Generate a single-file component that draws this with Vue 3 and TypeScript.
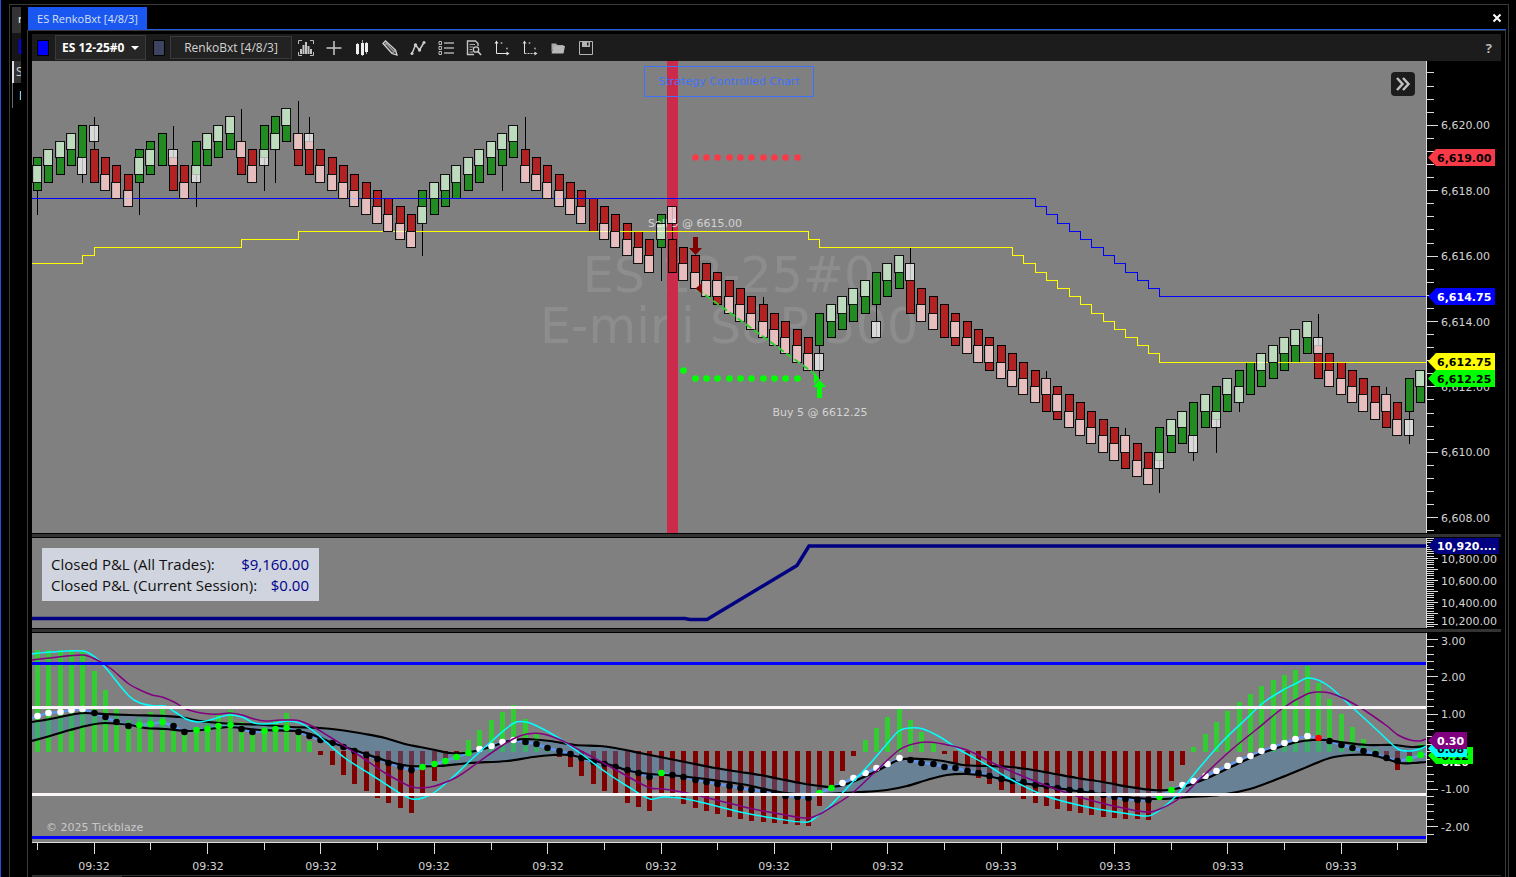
<script setup lang="ts">
import { ref } from 'vue'

type Side = 'g' | 'r'
/** side, body top, smoothed box top, wick high, wick low - all in ticks below 6,620.00 */
type Bar = [Side, number, number | null, (number | null)?, (number | null)?]
type Point = [number, number]

const bars: Bar[] = [
  ['g', 4, 5, null, 11], ['g', 3, 3], ['g', 2, 2], ['g', 1, 1], ['g', 0, 4, null, 7],
  ['r', 3, 0, -1], ['r', 4, 6], ['r', 5, 7], ['r', 6, 8], ['g', 3, 4, null, 11],
  ['g', 2, 3], ['g', 1, null], ['r', 4, 3, 0], ['r', 5, 7], ['g', 2, 5, null, 10],
  ['g', 1, 1], ['g', 0, 0], ['g', -1, -1], ['r', 2, 2, -2], ['r', 3, 5],
  ['g', 0, 3, null, 8], ['g', -1, 1, null, 7], ['g', -2, -2], ['r', 1, 1, -3], ['r', 2, 1, -1],
  ['r', 3, 5], ['r', 4, 6], ['r', 5, 7], ['r', 6, 8], ['r', 7, 9],
  ['r', 8, 10], ['r', 9, 11], ['r', 10, 12], ['r', 11, 13], ['g', 8, 10, null, 16],
  ['g', 7, 7], ['g', 6, 6], ['g', 5, 5], ['g', 4, 4], ['g', 3, 3],
  ['g', 2, 2], ['g', 1, 1, null, 8], ['g', 0, 0], ['r', 3, 5, -1], ['r', 4, 6],
  ['r', 5, 7], ['r', 6, 8], ['r', 7, 9], ['r', 8, 10], ['r', 9, null],
  ['r', 10, 12], ['r', 11, 13], ['r', 12, 14], ['r', 13, 15], ['r', 14, 16],
  ['g', 11, 12, null, 19], ['r', 14, 10, 10], ['r', 15, 17], ['r', 16, 18], ['r', 17, 19],
  ['r', 18, 19], ['r', 19, 21], ['r', 20, 22], ['r', 21, 23], ['r', 22, 24, 21],
  ['r', 23, 25], ['r', 24, 26], ['r', 25, 27], ['r', 26, 28], ['g', 23, 28, null, 31],
  ['g', 22, 22], ['g', 21, 21], ['g', 20, 20], ['g', 19, 19], ['g', 18, 24, null, 26],
  ['g', 17, 17], ['g', 16, 16], ['r', 19, 17, 15], ['r', 20, 22], ['r', 21, 23],
  ['r', 22, null], ['r', 23, 24], ['r', 24, 26], ['r', 25, 27], ['r', 26, 27],
  ['r', 27, 29], ['r', 28, 30], ['r', 29, 31], ['r', 30, 32], ['r', 31, 31, 30],
  ['r', 32, 33], ['r', 33, 35], ['r', 34, 36], ['r', 35, 37], ['r', 36, 38],
  ['r', 37, 39], ['r', 38, 38, 37], ['r', 39, 41], ['r', 40, 42], ['g', 37, 40, null, 45],
  ['g', 36, 36], ['g', 35, 35], ['g', 34, 38, null, 41], ['g', 33, 33], ['g', 32, 35, null, 40],
  ['g', 31, 31], ['g', 30, 32, null, 35], ['g', 29, null], ['g', 28, 28], ['g', 27, 27],
  ['g', 26, 26], ['g', 25, 25], ['g', 24, 24], ['r', 27, 26, 23], ['r', 28, 30],
  ['r', 29, 31], ['r', 30, 32], ['r', 31, 33], ['r', 32, 34], ['r', 33, 33, 32],
  ['r', 34, 36], ['g', 31, 36, null, 39], ['g', 30, 30],
]

const barX = (i: number) => Math.floor(37.6 + 11.335 * i) + 0.5
const tickY = (k: number) => Math.floor(125 + 8.175 * k) + 0.5

const candles = bars.map(([side, body, box, high, low], i) => ({
  x: barX(i),
  side,
  top: tickY(body),
  height: tickY(body + 4) - tickY(body),
  boxTop: box === null ? null : tickY(box),
  boxHeight: box === null ? 0 : tickY(box + 2) - tickY(box),
  wickTop: tickY(high ?? body),
  wickBottom: tickY(low ?? body + 4),
}))

/** Staircase line: first level, then [bar index, level] changes */
function stairs(first: number, steps: Point[]): string {
  let d = `M32 ${tickY(first)}`
  for (const [i, k] of steps) d += `H${barX(i)}V${tickY(k)}`
  return d + 'H1426'
}
const run = (from: number, level: number, count: number): Point[] =>
  Array.from({ length: count }, (_, n) => [from + n, level + n] as Point)

const yellowLine = stairs(17, [[4, 16], [5, 15], [18, 14], [23, 13], [68, 14], [69, 15], ...run(86, 16, 14)])
const blueLine = stairs(9, run(88, 10, 12))

const stopDots = Array.from({ length: 10 }, (_, n) => barX(58 + n))

const priceTicks = Array.from({ length: 36 }, (_, n) => {
  const index = n - 4
  return { y: Math.floor(125.3 + index * 13.08) + 0.5, major: index % 5 === 0 }
}).filter((t) => t.y < 532)
const priceLabels = [6620, 6618, 6616, 6614, 6612, 6610, 6608].map((p, n) => ({
  text: p.toLocaleString('en-US', { minimumFractionDigits: 2 }),
  y: Math.round(129.4 + n * 65.4),
}))

const pnlTicks = Array.from({ length: 41 }, (_, n) => ({
  y: Math.floor(538.5 + n * 2.2) + 0.5,
  major: n % 5 === 4 && n > 4,
}))
const pnlLabels = [
  { text: '10,800.00', y: 563 },
  { text: '10,600.00', y: 585 },
  { text: '10,400.00', y: 607 },
  { text: '10,200.00', y: 625 },
]

const oscTicks = Array.from({ length: 27 }, (_, n) => ({
  y: Math.floor(639.3 + n * 7.49) + 0.5,
  major: n % 5 === 0,
}))
const oscLabels = [
  { text: '3.00', y: 645 },
  { text: '2.00', y: 681 },
  { text: '1.00', y: 718 },
  { text: '-1.00', y: 793 },
  { text: '-2.00', y: 831 },
]

const histTips = [
  650, 650, 650, 650, 652, 671, 690, 709, 720, 718, 712, 706, 723, 730, 727, 722, 715, 710, 722, 730,
  727, 720, 713, 727, 741, 754, 764, 774, 783, 790, 797, 802, 807, 812, 794, 780, 759, 753, 740, 730,
  720, 712, 705, 719, 733, 746, 756, 766, 775, 783, 790, 794, 802, 806, 810, 795, 796, 803, 807, 810,
  813, 816, 818, 820, 821, 822, 823, 824, 825, 805, 789, 770, 755, 740, 728, 717, 709, 720, 732, 743,
  753, 762, 771, 777, 783, 789, 793, 798, 802, 805, 808, 810, 812, 814, 816, 817, 818, 818, 819, 793,
  780, 764, 747, 734, 722, 711, 702, 694, 686, 680, 675, 670, 666, 683, 699, 714, 727, 739, 749, 757,
  769, 755, 744,
]
const histogram = histTips.map((tip, i) => ({
  x: barX(i) - 2.5,
  y: Math.min(tip, 751),
  height: Math.abs(751 - tip) + 1,
  up: tip < 751,
}))

const dotYs = [
  716, 713, 712, 710, 709, 713, 717, 722, 726, 725, 724, 722, 726, 732, 730, 729, 726, 725, 729, 732,
  731, 729, 728, 732, 736, 740, 743, 747, 751, 755, 759, 763, 767, 770, 767, 764, 761, 757, 753, 749,
  746, 742, 740, 742, 744, 748, 751, 754, 758, 762, 764, 767, 770, 773, 777, 773, 775, 777, 780, 782,
  784, 786, 788, 790, 791, 793, 796, 797, 798, 793, 788, 783, 778, 773, 768, 764, 758, 760, 763, 764,
  767, 768, 771, 773, 776, 779, 781, 782, 785, 786, 788, 790, 791, 793, 795, 797, 799, 800, 800, 797,
  790, 785, 781, 776, 771, 766, 760, 756, 751, 747, 743, 739, 736, 738, 741, 745, 748, 751, 754, 758,
  761, 759, 755,
]
const dotKinds =
  'wwwwwbbbbgggbbggggbbgggbbbbbbbbbbbgggggwwwwbbbbbbbbbbbbgbbbbbbbbbbbbbggwwwwww' +
  'bbbbbbbbbbbbbbbbbbbbbbggwwwwwwwwwwwwrbbbbbbbgg'
const dots = dotYs.map((y, i) => ({ x: barX(i), y, kind: dotKinds[i] }))
const momentumLine = 'M32 718L' + dots.map((d) => `${d.x} ${d.y}`).join('L') + 'L1426 754'

const upperBand: Point[] = [
  [32, 722], [50, 719], [75, 714], [85, 713], [105, 714], [130, 715], [165, 716], [180, 717], [200, 721],
  [220, 723], [240, 724], [265, 725], [290, 727], [320, 728], [340, 730], [365, 734], [385, 738], [405, 744],
  [420, 747], [435, 750], [450, 753], [465, 753], [475, 751], [490, 747], [505, 742], [515, 740], [525, 739],
  [550, 741], [575, 745], [600, 746], [615, 748], [640, 753], [665, 758], [690, 763], [715, 768], [740, 772],
  [760, 775], [780, 779], [800, 783], [820, 786], [832, 787], [847, 784], [877, 771], [899, 760], [923, 759],
  [943, 761], [963, 765], [987, 766], [1010, 767], [1027, 769], [1050, 773], [1077, 778], [1103, 782],
  [1130, 787], [1153, 790], [1168, 790], [1183, 787], [1197, 782], [1210, 777], [1233, 766], [1257, 755],
  [1280, 747], [1297, 742], [1313, 740], [1327, 740], [1340, 742], [1367, 745], [1393, 745], [1413, 747],
  [1426, 746],
]
const lowerBand: Point[] = [
  [32, 741], [50, 736], [70, 730], [90, 725], [105, 723], [130, 725], [145, 728], [165, 729], [190, 731],
  [217, 728], [230, 727], [260, 730], [297, 731], [313, 735], [330, 742], [363, 753], [390, 762], [410, 766],
  [440, 766], [470, 763], [507, 761], [533, 757], [553, 755], [570, 755], [587, 759], [607, 764], [630, 771],
  [650, 774], [680, 776], [720, 781], [747, 785], [773, 791], [797, 794], [820, 794], [860, 792], [887, 790],
  [907, 786], [927, 780], [947, 775], [967, 774], [987, 776], [1010, 781], [1043, 786], [1077, 791],
  [1110, 795], [1137, 798], [1160, 799], [1190, 797], [1220, 795], [1250, 789], [1280, 778], [1307, 767],
  [1330, 758], [1350, 755], [1370, 755], [1387, 759], [1400, 763], [1413, 763], [1426, 762],
]
const cyanPoints: Point[] = [
  [32, 654], [50, 652], [83, 651], [95, 657], [105, 667], [129, 696], [140, 703], [155, 706], [165, 706],
  [175, 712], [186, 719], [198, 722], [210, 720], [220, 717], [230, 715], [242, 717], [254, 723], [264, 724],
  [276, 723], [288, 721], [300, 723], [312, 730], [325, 741], [345, 758], [370, 774], [390, 787], [405, 796],
  [412, 799], [423, 798], [435, 792], [453, 777], [473, 758], [493, 740], [514, 723], [526, 722], [537, 726],
  [557, 737], [580, 753], [607, 773], [627, 786], [650, 799], [663, 797], [680, 798], [700, 802], [740, 812],
  [773, 818], [808, 822], [820, 814], [830, 806], [847, 788], [867, 767], [887, 744], [899, 731], [910, 728],
  [923, 729], [940, 737], [960, 750], [987, 765], [1010, 779], [1043, 795], [1070, 803], [1097, 809],
  [1123, 813], [1148, 816], [1160, 810], [1177, 795], [1200, 767], [1223, 741], [1247, 718], [1263, 703],
  [1283, 690], [1297, 683], [1307, 678], [1318, 680], [1330, 687], [1353, 708], [1377, 730], [1398, 749],
  [1410, 751], [1420, 749], [1426, 746],
]
const purplePoints: Point[] = [
  [32, 660], [50, 658], [83, 655], [95, 659], [110, 668], [129, 684], [140, 690], [152, 695], [162, 697],
  [174, 702], [186, 709], [196, 712], [210, 714], [220, 714], [230, 713], [242, 715], [254, 719], [265, 721],
  [280, 720], [290, 720], [300, 721], [312, 726], [330, 737], [360, 756], [385, 773], [405, 784], [412, 787],
  [422, 788], [435, 786], [457, 777], [480, 761], [500, 747], [515, 738], [527, 734], [543, 734], [563, 741],
  [583, 752], [607, 765], [627, 776], [650, 788], [663, 789], [687, 793], [720, 801], [753, 809], [780, 814],
  [808, 818], [820, 814], [830, 808], [850, 795], [873, 774], [899, 750], [913, 744], [927, 742], [943, 744],
  [967, 750], [997, 765], [1037, 782], [1070, 794], [1097, 802], [1123, 808], [1148, 812], [1160, 809],
  [1180, 798], [1200, 779], [1230, 751], [1257, 729], [1283, 708], [1307, 694], [1318, 692], [1330, 693],
  [1347, 700], [1367, 712], [1387, 726], [1398, 735], [1410, 740], [1420, 741], [1426, 739],
]

/** Smooth path through a list of points */
function smooth(points: Point[]): string {
  let d = `M${points[0][0]} ${points[0][1]}`
  for (let i = 0; i < points.length - 1; i++) {
    const a = points[Math.max(0, i - 1)]
    const b = points[i]
    const c = points[i + 1]
    const e = points[Math.min(points.length - 1, i + 2)]
    const w = (c[0] - b[0]) / 3
    const s1 = (c[1] - a[1]) / (c[0] - a[0])
    const s2 = (e[1] - b[1]) / (e[0] - b[0])
    d += `C${(b[0] + w).toFixed(1)} ${(b[1] + s1 * w).toFixed(1)} ${(c[0] - w).toFixed(1)} ${(c[1] - s2 * w).toFixed(1)} ${c[0]} ${c[1]}`
  }
  return d
}
const upperPath = smooth(upperBand)
const lowerPath = smooth(lowerBand)
const bandArea =
  upperPath + 'L' + [...lowerBand].reverse().map(([x, y]) => `${x} ${y}`).join('L') + 'Z'
const cyanPath = smooth(cyanPoints)
const purplePath = smooth(purplePoints)

const timeTicks = Array.from({ length: 25 }, (_, n) => ({ x: barX(n * 5), major: n % 2 === 1 })).filter(
  (t) => t.x < 1420,
)
const timeLabels = Array.from({ length: 12 }, (_, n) => ({
  x: Math.round(94.4 + n * 113.35),
  text: n < 8 ? '09:32' : '09:33',
}))

interface Tag { y: number; right: number; text: string; fill: string; ink: string }
const tagPath = (t: Tag) => `M1428 ${t.y}L1436 ${t.y - 8.5}H${t.right}V${t.y + 8.5}H1436Z`
const priceTags: Tag[] = [
  { y: 157.5, right: 1495, text: '6,619.00', fill: '#f83a48', ink: '#000' },
  { y: 296.5, right: 1495, text: '6,614.75', fill: '#0000ff', ink: '#fff' },
  { y: 361.5, right: 1495, text: '6,612.75', fill: '#ffff00', ink: '#000' },
  { y: 378.5, right: 1495, text: '6,612.25', fill: '#00ff00', ink: '#000' },
]
const oscTags: Tag[] = [
  { y: 761.5, right: 1473, text: '-0.26', fill: '#000', ink: '#fff' },
  { y: 755.5, right: 1473, text: '-0.12', fill: '#00ff00', ink: '#000' },
  { y: 748.5, right: 1467, text: '0.08', fill: '#00ffff', ink: '#000' },
  { y: 740.5, right: 1467, text: '0.30', fill: '#800080', ink: '#fff' },
]
const pnlTag: Tag = { y: 545.5, right: 1499, text: '10,920....', fill: '#000080', ink: '#fff' }

const instrument = ref('ES 12-25#0')

const closedPnl = [
  { label: 'Closed P&L (All Trades):', value: '$9,160.00' },
  { label: 'Closed P&L (Current Session):', value: '$0.00' },
]
</script>

<template>
  <div class="desk">
    <div class="outer">
      <aside class="behind" aria-hidden="true">
        <div class="behind-tab">r</div>
        <div class="behind-bar"><i></i></div>
        <div class="behind-search">S</div>
        <div class="behind-item">I</div>
      </aside>

      <main class="window">
        <header class="tabs">
          <button class="tab" type="button">ES RenkoBxt [4/8/3]</button>
          <button class="close" type="button" aria-label="Close">
            <svg width="10" height="10" viewBox="0 0 10 10"><path d="M1.500 1.500L8.500 8.500M8.500 1.500L1.500 8.500" stroke="#fff" stroke-width="2" /></svg>
          </button>
        </header>

        <div class="content">
          <div class="toolbar">
            <button class="swatch link" type="button" aria-label="Instrument link colour"></button>
            <div class="instrument">
              <select v-model="instrument" aria-label="Instrument">
                <option>ES 12-25#0</option>
              </select>
              <svg width="8" height="4" viewBox="0 0 8 4"><path d="M0 0H8L4 4Z" fill="#fff" /></svg>
            </div>
            <button class="swatch interval" type="button" aria-label="Interval link colour"></button>
            <button class="bar-type" type="button">RenkoBxt [4/8/3]</button>

            <div class="tools">
              <button type="button" aria-label="Chart style">
                <svg viewBox="0 0 16 16"><path d="M.5 4V.5H4M12 .5H15.500V4M.5 12V15.500H4M12 15.500H15.500V12" fill="none" stroke="#bbb" /><path d="M2 9H4V14H2ZM4.500 5H6.500V14H4.500ZM7 2H9V14H7ZM9.500 6H11.500V14H9.500ZM12 9H14V14H12Z" fill="#c4c4c4" /></svg>
              </button>
              <button type="button" aria-label="Crosshair">
                <svg viewBox="0 0 16 16"><path d="M8 1V15M.5 8H15.500" stroke="#c8c8c8" stroke-width="1.500" /></svg>
              </button>
              <button type="button" aria-label="Candles">
                <svg viewBox="0 0 16 16"><path d="M3.500 3V15M8.500 0V16M12.500 2V14" stroke="#aaa" /><path d="M2 4H5V14H2ZM7 3H10V15H7ZM11 3H14V12H11Z" fill="#eee" /></svg>
              </button>
              <button type="button" aria-label="Drawing tools">
                <svg viewBox="0 0 16 16"><path d="M1 3.500L3.500 1L13.500 10L15 15L10 13.500Z" fill="#444" stroke="#d0d0d0" stroke-width="1.300" /><path d="M2.500 5L5 2.500M4 3.500L12 11.500M10 13.500L13.500 10" stroke="#d0d0d0" fill="none" /></svg>
              </button>
              <button type="button" aria-label="Indicators">
                <svg viewBox="0 0 16 16"><path d="M2 13.500L5.500 5L9.500 10L14 2.500" fill="none" stroke="#ccc" stroke-width="1.500" /><circle cx="2" cy="13.500" r="1.500" fill="#ccc" /><circle cx="5.500" cy="5" r="1.700" fill="#ccc" /><circle cx="9.500" cy="10" r="1.700" fill="#ccc" /><circle cx="14" cy="2.500" r="1.500" fill="#ccc" /></svg>
              </button>
              <button type="button" aria-label="Properties">
                <svg viewBox="0 0 16 16"><path d="M6 3H16M6 8H16M6 13H16" stroke="#aaa" stroke-width="1.500" /><path d="M1 1.500H3.500V4.500H1ZM1 6.500H3.500V9.500H1ZM1 11.500H3.500V14.500H1Z" fill="none" stroke="#bbb" /></svg>
              </button>
              <button type="button" aria-label="Data box">
                <svg viewBox="0 0 16 16"><path d="M12 6V3.500L9.500 1H1.500V14.500H8" fill="none" stroke="#c4c4c4" stroke-width="1.400" /><path d="M3.500 4.500H9M3.500 7H7M3.500 9.500H6M3.500 12H7" stroke="#aaa" /><circle cx="10" cy="9.500" r="2.700" fill="none" stroke="#ccc" stroke-width="1.300" /><path d="M12 11.500L15 15" stroke="#ccc" stroke-width="1.600" /></svg>
              </button>
              <button type="button" aria-label="Fit horizontal axis">
                <svg viewBox="0 0 16 16"><path d="M2.500 2V13.500H14" fill="none" stroke="#e4e4e4" /><path d="M.5 3.500L2.500 .5L4.500 3.500ZM12.500 11.500L15.500 13.500L12.500 15.500Z" fill="#e4e4e4" /><circle cx="7.500" cy="3" r="1" fill="#999" /><circle cx="13" cy="8.500" r="1" fill="#999" /></svg>
              </button>
              <button type="button" aria-label="Fit vertical axis">
                <svg viewBox="0 0 16 16"><path d="M2.500 2V13.500" stroke="#e4e4e4" /><path d="M2.500 13.500H13" stroke="#ccc" stroke-dasharray="2 1" /><path d="M.5 3.500L2.500 .5L4.500 3.500ZM12.500 11.500L15.500 13.500L12.500 15.500Z" fill="#d4d4d4" /><circle cx="7.500" cy="3" r="1" fill="#999" /><circle cx="13" cy="8.500" r="1" fill="#999" /></svg>
              </button>
              <button type="button" aria-label="Open template">
                <svg viewBox="0 0 16 16"><path d="M1.500 12V3.500H6L7.500 5H13.500V6H4Z" fill="#a8a8a8" /><path d="M3.500 6H15L13.500 13.500H1.500Z" fill="#b8b8b8" /></svg>
              </button>
              <button type="button" aria-label="Save">
                <svg viewBox="0 0 16 16"><path d="M1.500 1.500H14.500V14.500H1.500Z" fill="none" stroke="#b4b4b4" /><path d="M4 1.500H12V7H4Z" fill="#b4b4b4" /><path d="M9 2.500H10.500V5.500H9Z" fill="#1c1c1c" /></svg>
              </button>
            </div>
            <button class="help" type="button" aria-label="Help">?</button>
          </div>

          <section class="pane">
            <svg class="plot" viewBox="32 61 1469 472" role="img" aria-label="ES 12-25 price chart">
              <rect x="32" y="61" width="1394" height="472" fill="#808080" />
              <g class="watermark">
                <text x="729" y="292">ES 12-25#0</text>
                <text x="729" y="343">E-mini S&amp;P 500</text>
              </g>
              <rect x="667" y="61" width="11" height="472" fill="#cc2a4a" />
              <g class="crisp">
                <template v-for="c in candles" :key="c.x">
                  <line :x1="c.x" :x2="c.x" :y1="c.wickTop" :y2="c.wickBottom" stroke="#000" />
                  <rect class="body" :class="c.side" :x="c.x - 4" :y="c.top" width="8" :height="c.height" />
                </template>
                <path :d="blueLine" fill="none" stroke="#0000ff" />
                <path :d="yellowLine" fill="none" stroke="#ffff00" />
              </g>
              <g class="trade">
                <text x="695" y="227">Sell 5 @ 6615.00</text>
                <text x="820" y="416">Buy 5 @ 6612.25</text>
              </g>
              <g class="crisp">
                <template v-for="c in candles" :key="c.x">
                  <rect v-if="c.boxTop !== null" class="box" :x="c.x - 5" :y="c.boxTop" width="9" :height="c.boxHeight" />
                </template>
              </g>
              <path d="M697 289L819 377" stroke="#32cd32" stroke-width="2" stroke-dasharray="7 3" />
              <path d="M693 237H698V248H702L695.500 255L689 248H693Z" fill="#800000" />
              <path d="M695.500 288.500L702 283V294Z" fill="#800000" />
              <path d="M819.500 378.500L814 373V384Z" fill="#00ff00" />
              <path d="M817 398V387H813L819.500 380L826 387H822V398Z" fill="#00ff00" />
              <circle v-for="x in stopDots" :key="'s' + x" :cx="x" cy="157.500" r="3.300" fill="#f83a48" />
              <circle v-for="x in stopDots" :key="'t' + x" :cx="x" cy="378.500" r="3.300" fill="#00ff00" />
              <circle cx="683.500" cy="370.500" r="3.300" fill="#00ff00" />

              <g class="crisp axis">
                <path d="M1426.500 61V533" />
                <path v-for="t in priceTicks" :key="t.y" :d="`M1427 ${t.y}h${t.major ? 11 : 7}`" />
              </g>
              <text v-for="l in priceLabels" :key="l.y" class="label" x="1441" :y="l.y">{{ l.text }}</text>
              <template v-for="t in priceTags" :key="t.text">
                <path :d="tagPath(t)" :fill="t.fill" />
                <text class="tag" x="1437" :y="t.y + 4.500" :fill="t.ink">{{ t.text }}</text>
              </template>
            </svg>
            <div class="strategy">Strategy Controlled Chart</div>
            <button class="expand" type="button" aria-label="Expand trader panel">
              <svg width="16" height="16" viewBox="0 0 16 16"><path d="M2 2L7.500 8L2 14M8 2L13.500 8L8 14" fill="none" stroke="#c0c0c0" stroke-width="2.500" /></svg>
            </button>
          </section>

          <hr class="splitter" />

          <section class="pane">
            <svg class="plot" viewBox="32 538 1469 90" role="img" aria-label="Closed profit and loss">
              <rect x="32" y="538" width="1394" height="90" fill="#808080" />
              <path d="M32 618.500H685L690 619.500H707L797 565.500L809 546H1426" fill="none" stroke="#000080" stroke-width="3.500" />
              <g class="crisp axis">
                <path d="M1426.500 538V628" />
                <path v-for="t in pnlTicks" :key="t.y" :d="`M1427 ${t.y}h${t.major ? 11 : 7}`" />
              </g>
              <text v-for="l in pnlLabels" :key="l.y" class="label" x="1441" :y="l.y">{{ l.text }}</text>
              <path :d="tagPath(pnlTag)" :fill="pnlTag.fill" />
              <text class="tag" x="1437" :y="pnlTag.y + 4.500" :fill="pnlTag.ink">{{ pnlTag.text }}</text>
            </svg>
            <dl class="pnl">
              <div v-for="row in closedPnl" :key="row.label">
                <dt>{{ row.label }}</dt>
                <dd>{{ row.value }}</dd>
              </div>
            </dl>
          </section>

          <hr class="splitter" />

          <section class="pane">
            <svg class="plot" viewBox="32 633 1469 242" role="img" aria-label="Momentum oscillator">
              <rect x="32" y="633" width="1394" height="209" fill="#808080" />
              <g class="crisp">
                <rect v-for="h in histogram" :key="h.x" :x="h.x" :y="h.y" width="5" :height="h.height" :fill="h.up ? '#32cd32' : '#800000'" />
              </g>
              <path :d="bandArea" fill="#4682b4" fill-opacity="0.400" />
              <path :d="momentumLine" fill="none" stroke="#6495ed" stroke-width="2.500" />
              <path :d="upperPath" fill="none" stroke="#000" stroke-width="2.200" />
              <path :d="lowerPath" fill="none" stroke="#000" stroke-width="2.200" />
              <circle v-for="d in dots" :key="d.x" :class="['dot', d.kind]" :cx="d.x" :cy="d.y" r="3.300" />
              <path :d="cyanPath" fill="none" stroke="#00ffff" stroke-width="1.500" />
              <path :d="purplePath" fill="none" stroke="#800080" stroke-width="1.500" />
              <path d="M32 663.500H1426M32 837.500H1426" stroke="#0000ff" stroke-width="3" />
              <path d="M32 707.500H1426M32 794.500H1426" stroke="#f8f4f8" stroke-width="3" />
              <text class="copyright" x="46" y="831">© 2025 Tickblaze</text>

              <g class="crisp axis">
                <path d="M1426.500 633V842.500H32" />
                <path v-for="t in oscTicks" :key="t.y" :d="`M1427 ${t.y}h${t.major ? 11 : 7}`" />
                <path v-for="t in timeTicks" :key="t.x" :d="`M${t.x} 843v${t.major ? 11 : 7}`" />
              </g>
              <text v-for="l in oscLabels" :key="l.y" class="label" x="1441" :y="l.y">{{ l.text }}</text>
              <text v-for="l in timeLabels" :key="l.x" class="label time" :x="l.x" y="870">{{ l.text }}</text>
              <template v-for="t in oscTags" :key="t.text">
                <path :d="tagPath(t)" :fill="t.fill" />
                <text class="tag" x="1437" :y="t.y + 4.500" :fill="t.ink">{{ t.text }}</text>
              </template>
            </svg>
          </section>

          <footer class="foot"><i></i></footer>
        </div>
      </main>
    </div>
  </div>
</template>

<style>
body {
  margin: 0;
  background: #000;
}
</style>

<style scoped>
.desk {
  box-sizing: border-box;
  min-height: 100vh;
  padding: 4px 7px 0 8px;
  border-left: 1px solid #1f50e0;
  background: #000;
  color: #d4d4d4;
  font-family: "Open Sans", "Noto Sans", sans-serif;
  font-size: 12px;
}
button,
select {
  margin: 0;
  padding: 0;
  border: 0;
  background: none;
  color: inherit;
  font: inherit;
}
.outer {
  display: flex;
  border: 1px solid #3a3a3a;
  border-bottom: 0;
}
.behind {
  flex: none;
  width: 9px;
  margin: 2px 6px 0 2px;
  overflow: hidden;
}
.behind div {
  box-sizing: border-box;
  overflow: hidden;
}
.behind-tab {
  height: 26px;
  padding-left: 6px;
  background: #333;
  color: #fff;
  font-size: 11px;
  line-height: 24px;
}
.behind-bar {
  height: 28px;
  padding: 6px 0 0 7px;
  background: #161616;
}
.behind-bar i {
  display: block;
  height: 15px;
  background: #0000ff;
}
.behind-search {
  height: 22px;
  padding-left: 2px;
  border-left: 2px solid #ddd;
  background: #333;
  line-height: 22px;
}
.behind-item {
  height: 25px;
  padding-left: 6px;
  border-left: 1px solid #666;
  color: #fff;
  line-height: 26px;
}
.window {
  flex: 1;
  min-width: 0;
  margin-right: 2px;
}
.tabs {
  display: flex;
  justify-content: space-between;
  align-items: flex-end;
  height: 24px;
  margin-left: 1px;
  border-bottom: 1px solid #1f56e8;
}
.tab {
  min-width: 119px;
  height: 22px;
  padding: 0 8px;
  background: #1a56f0;
  color: #d8e0f0;
  font-size: 11px;
  white-space: nowrap;
}
.close {
  display: flex;
  align-items: center;
  height: 22px;
  margin-right: 4px;
}
.content {
  padding: 3px 4px 0;
  border: 1px solid #3a3a3a;
  border-bottom: 0;
}
.toolbar {
  display: flex;
  align-items: center;
  height: 27px;
  padding-left: 5px;
  background: #1c1c1c;
}
.swatch {
  box-sizing: border-box;
  flex: none;
  width: 12px;
  height: 16px;
  border: 1px solid #000;
}
.link {
  background: #0000ff;
}
.interval {
  background: #3d4460;
}
.instrument {
  position: relative;
  display: flex;
  align-items: center;
  box-sizing: border-box;
  height: 25px;
  margin: 0 7px 0 6px;
  border: 1px solid #3a3a3a;
  background: #262626;
}
.instrument select {
  width: 89px;
  padding-left: 6px;
  appearance: none;
  color: #fff;
  font-weight: 700;
}
.instrument option {
  background: #262626;
}
.instrument svg {
  position: absolute;
  right: 6px;
  pointer-events: none;
}
.bar-type {
  box-sizing: border-box;
  width: 122px;
  height: 23px;
  margin-left: 5px;
  border: 1px solid #3a3a3a;
  background: #222;
  white-space: nowrap;
}
.tools {
  display: flex;
  gap: 12px;
  margin-left: 6px;
}
.tools button,
.tools svg {
  display: block;
  width: 16px;
  height: 16px;
}
.help {
  margin: 0 9px 0 auto;
  color: #b8b8b8;
  font-weight: 700;
  font-size: 13px;
}
.pane {
  position: relative;
}
.plot {
  display: block;
  width: 100%;
  height: auto;
  font-family: "DejaVu Sans", Verdana, sans-serif;
  font-size: 11px;
}
.crisp {
  shape-rendering: crispEdges;
}
.watermark {
  fill: #8d8d8d;
  font-size: 49px;
  text-anchor: middle;
}
.body {
  stroke: #000;
}
.g {
  fill: #228b22;
}
.r {
  fill: #b22222;
}
.box {
  fill: #fff;
  fill-opacity: 0.7;
  stroke: #111;
}
.trade {
  fill: #d3d3d3;
  text-anchor: middle;
}
.axis {
  fill: none;
  stroke: #dcdcdc;
}
.label {
  fill: #d3d3d3;
}
.time {
  text-anchor: middle;
}
.tag {
  font-weight: 700;
}
.copyright {
  fill: #c8c8c8;
}
.dot.w {
  fill: #fff;
}
.dot.b {
  fill: #000;
}
.dot.g {
  fill: #00ff00;
}
.dot.r {
  fill: #ff0000;
}
.strategy {
  position: absolute;
  top: 5px;
  left: 612px;
  box-sizing: border-box;
  width: 170px;
  height: 31px;
  border: 1px solid #3f73ff;
  color: #3f73ff;
  font: 11px/30px "DejaVu Sans", Verdana, sans-serif;
  text-align: center;
  white-space: nowrap;
}
.expand {
  position: absolute;
  top: 11px;
  right: 86px;
  display: flex;
  align-items: center;
  justify-content: center;
  width: 24px;
  height: 24px;
  border-radius: 4px;
  background: #1c1c1c;
}
.splitter {
  height: 3px;
  margin: 0;
  border: solid #000;
  border-width: 1px 0;
  background: #333;
}
.pnl {
  position: absolute;
  top: 10px;
  left: 10px;
  box-sizing: border-box;
  width: 277px;
  margin: 0;
  padding: 6px 10px 5px 9px;
  background: #d0d4de;
  color: #101010;
  font-size: 15px;
  line-height: 21px;
}
.pnl div {
  display: flex;
  justify-content: space-between;
}
.pnl dt,
.pnl dd {
  margin: 0;
  white-space: nowrap;
}
.pnl dd {
  color: #00008b;
}
.foot {
  height: 2px;
  border-top: 1px solid #333;
  box-sizing: border-box;
}
.foot i {
  display: block;
  width: 90px;
  height: 1px;
  background: #2a2a2a;
}
</style>
